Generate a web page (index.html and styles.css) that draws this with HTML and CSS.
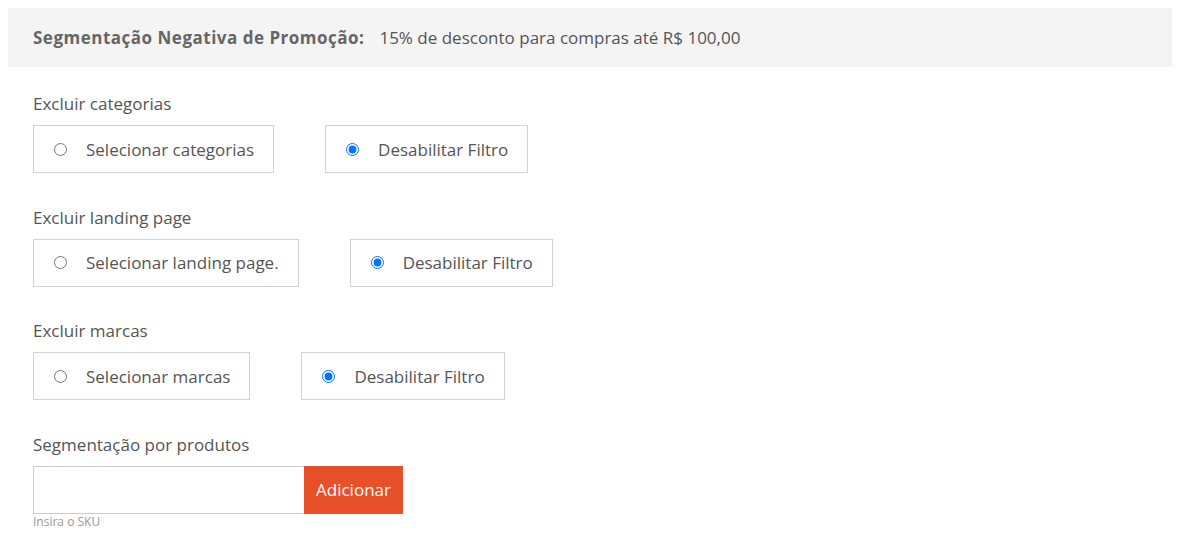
FILE: index.html
```html
<!DOCTYPE html>
<html>
  <head>
    <meta charset="utf-8">
    <title>Segmentação Negativa de Promoção</title>
    <link rel="stylesheet" href="styles.css">
  </head>
  <body>
    <!-- cabeçalho da promoção -->
    <div class="promo-header">
      <span class="promo-label">Segmentação Negativa de Promoção:</span>
      <span class="promo-value">15% de desconto para compras até R$ 100,00</span>
    </div>

    <div class="form">
      <div class="group">
        <div class="group-title">Excluir categorias</div>
        <div class="options">
          <label class="option"><input type="radio" name="cat" value="select">Selecionar categorias</label>
          <label class="option"><input type="radio" name="cat" value="off" checked>Desabilitar Filtro</label>
        </div>
      </div>

      <div class="group">
        <div class="group-title">Excluir landing page</div>
        <div class="options">
          <label class="option"><input type="radio" name="lp" value="select">Selecionar landing page.</label>
          <label class="option"><input type="radio" name="lp" value="off" checked>Desabilitar Filtro</label>
        </div>
      </div>

      <div class="group">
        <div class="group-title">Excluir marcas</div>
        <div class="options">
          <label class="option"><input type="radio" name="brand" value="select">Selecionar marcas</label>
          <label class="option"><input type="radio" name="brand" value="off" checked>Desabilitar Filtro</label>
        </div>
      </div>

      <div class="group">
        <div class="group-title">Segmentação por produtos</div>
        <div class="sku-row">
          <input type="text" class="sku-input">
          <button class="sku-button">Adicionar</button>
        </div>
        <div class="hint">Insira o SKU</div>
      </div>
    </div>
  </body>
</html>
```

FILE: styles.css
```css
body {
  margin: 8px 6px 0 8px;
  font-family: "Open Sans", "Noto Sans", Arial, sans-serif;
  color: #555;
  background: #fff;
}
/* cabeçalho cinza */
.promo-header {
  background-color: #f4f4f4;
  height: 59px;
  display: flex;
  align-items: center;
  padding: 0 25px;
  font-size: 17px;
}
.promo-label {
  font-weight: bold;
  color: #666;
  margin-right: 15px;
  letter-spacing: 0.5px;
}
.promo-value {
  color: #555;
}
.form {
  padding: 0 25px;
  margin-top: 25px;
}
.group {
  margin-bottom: 32.5px;
}
.group:last-child {
  margin-bottom: 0;
}
.group-title {
  font-size: 17px;
  line-height: 24px;
  margin-bottom: 9px;
}
.options {
  display: flex;
  gap: 51px;
}
.option {
  display: flex;
  align-items: center;
  height: 46px;
  border: 1px solid #d3d3d3;
  padding: 0 19px 0 20px;
  font-size: 17px;
  cursor: pointer;
}
.option input {
  margin: 0 19px 0 0;
  width: 13px;
  height: 13px;
}
/* campo de SKU */
.sku-row {
  display: flex;
}
.sku-input {
  width: 271px;
  height: 48px;
  box-sizing: border-box;
  border: 1px solid #ccc;
  border-right: none;
  margin: 0;
  padding: 0 10px;
}
.sku-button {
  background-color: #e8502a;
  color: white;
  border: none;
  height: 48px;
  width: 99px;
  font-family: inherit;
  font-size: 17px;
  padding: 0;
}
.hint {
  font-size: 12px;
  line-height: 16px;
  color: #999;
}
```
